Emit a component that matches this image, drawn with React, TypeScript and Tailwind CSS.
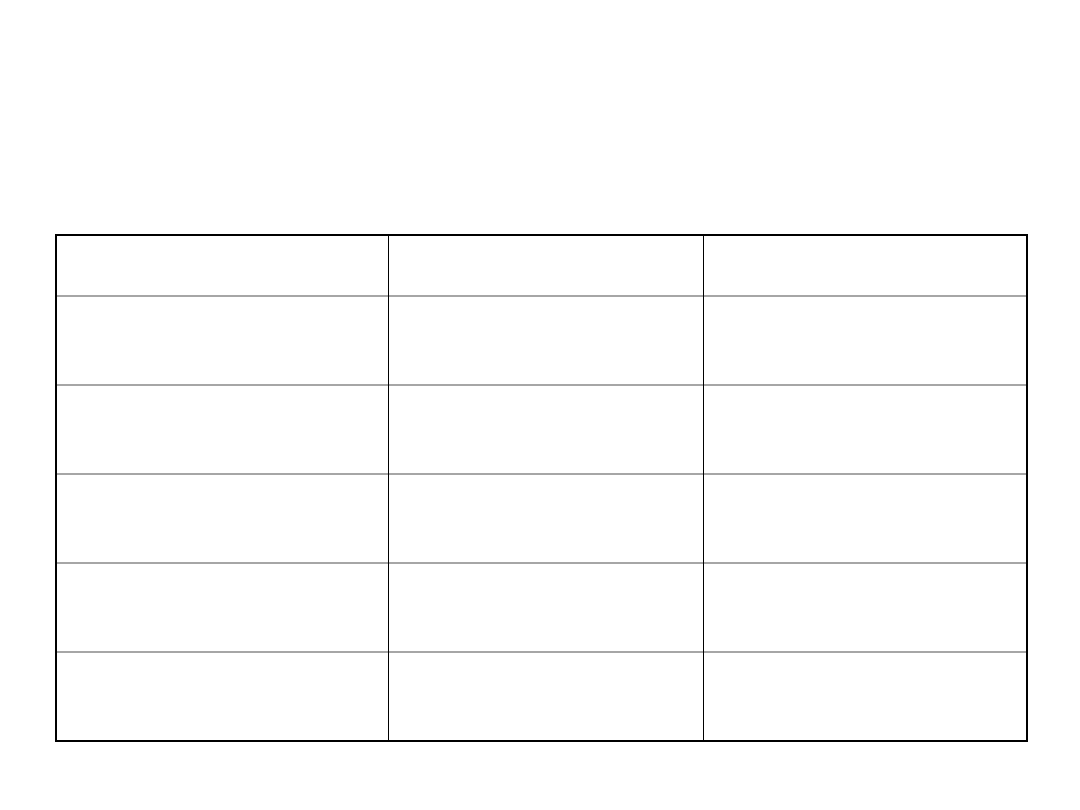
export default function App() {
  const rows = [59, 89, 89, 89, 89, 89];

  return (
    <div className="min-h-[810px] w-[1080px] bg-white pt-[234px] pl-[55px]">
      <div className="flex w-[973px] flex-col border-2 border-black">
        {rows.map((h, i) => (
          <div
            key={i}
            className={`flex ${i > 0 ? "border-t-2 border-[#a6a6a6]" : ""}`}
            style={{ height: h }}
          >
            <div className={`w-[332px] border-r border-black ${i > 0 ? "-mt-[2px]" : ""}`} />
            <div className={`w-[315px] border-r border-black ${i > 0 ? "-mt-[2px]" : ""}`} />
            <div className="flex-1" />
          </div>
        ))}
      </div>
    </div>
  );
}
